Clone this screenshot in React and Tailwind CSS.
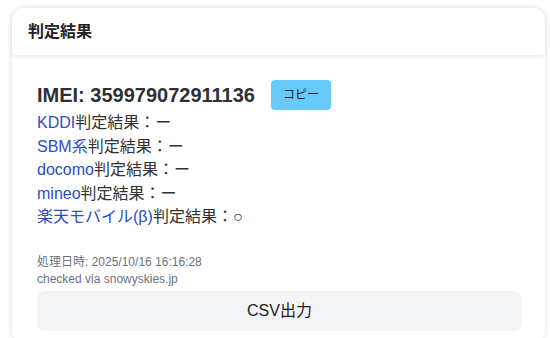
import React from 'react'

const results = [
  { carrier: 'KDDI', value: 'ー' },
  { carrier: 'SBM系', value: 'ー' },
  { carrier: 'docomo', value: 'ー' },
  { carrier: 'mineo', value: 'ー' },
  { carrier: '楽天モバイル(β)', value: '○' },
]

const App = () => {
  return (
    <div
      className="min-h-[338px] bg-white pt-2 pl-3 pr-[5px] overflow-hidden"
      style={{ fontFamily: '"Liberation Sans", Arial, "Noto Sans CJK JP", sans-serif' }}
    >
      <div className="rounded-xl bg-white shadow-[0_0_6px_rgba(0,0,0,0.12)]">
        <div className="h-[47px] flex items-center px-4 shadow-[0_2px_4px_rgba(0,0,0,0.08)] rounded-t-xl">
          <h2 className="text-[16px] font-bold text-[#222]">判定結果</h2>
        </div>
        <div className="px-[25px] pt-[25px] pb-3">
          <div className="flex items-center">
            <span className="text-[20px] font-bold text-[#2d3038] leading-7">IMEI: 359979072911136</span>
            <button className="ml-4 w-[60px] h-[30px] rounded bg-[#66cbfa] text-[12px] text-[#1a1a1a]">
              コピー
            </button>
          </div>
          <div className="mt-[1px]">
            {results.map((r) => (
              <p key={r.carrier} className="text-[16px] leading-[23.6px] text-[#333]">
                <span className="text-[#2c4dc6]">{r.carrier}</span>判定結果：{r.value}
              </p>
            ))}
          </div>
          <div className="mt-[25px] text-[12px] text-[#6b7280] leading-[17px]">
            <p>処理日時: 2025/10/16 16:16:28</p>
            <p>checked via snowyskies.jp</p>
          </div>
          <button className="mt-[3px] w-[485px] h-[40px] rounded-lg bg-[#f3f4f6] text-[16px] text-[#222]">
            CSV出力
          </button>
        </div>
      </div>
    </div>
  )
}

export default App
